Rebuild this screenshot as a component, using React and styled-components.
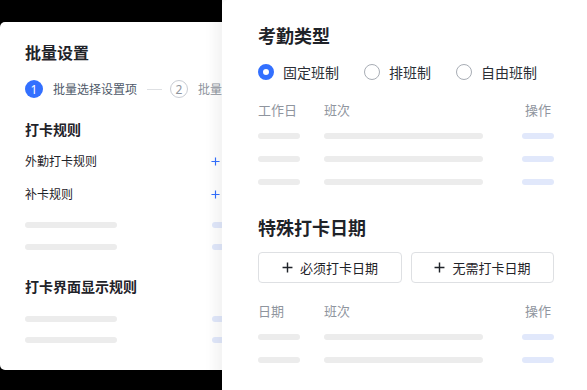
import React from "react";
import styled, { createGlobalStyle } from "styled-components";

const GlobalStyle = createGlobalStyle`
  html, body {
    margin: 0;
    padding: 0;
    background: #ffffff;
  }
  body {
    font-family: "Noto Sans CJK SC", "Noto Sans", sans-serif;
    color: #1f2329;
  }
`;

const BLUE = "#3370ff";

function Plus({ color = BLUE, size = 9 }) {
  return (
    <svg width={size} height={size} viewBox="0 0 10 10">
      <path d="M5 0.5v9M0.5 5h9" stroke={color} strokeWidth="1.3" fill="none" />
    </svg>
  );
}

export default function App() {
  return (
    <>
      <GlobalStyle />
      <Page>
        <LeftFrame>
          <Card>
            <CardTitle>批量设置</CardTitle>
            <Steps>
              <StepDot active>1</StepDot>
              <StepText>批量选择设置项</StepText>
              <StepLine />
              <StepDot>2</StepDot>
              <StepText muted>批量修改</StepText>
            </Steps>

            <GroupTitle mt={21}>打卡规则</GroupTitle>
            <RuleRow mt={13}>
              <span>外勤打卡规则</span>
              <Plus />
            </RuleRow>
            <RuleRow mt={15}>
              <span>补卡规则</span>
              <Plus />
            </RuleRow>
            <SkelRow mt={19}>
              <Bar w={92} />
              <Bar w={20} blue />
            </SkelRow>
            <SkelRow mt={16}>
              <Bar w={92} />
              <Bar w={20} blue />
            </SkelRow>

            <GroupTitle mt={26}>打卡界面显示规则</GroupTitle>
            <SkelRow mt={20}>
              <Bar w={92} />
              <Bar w={20} blue />
            </SkelRow>
            <SkelRow mt={15}>
              <Bar w={92} />
              <Bar w={20} blue />
            </SkelRow>
          </Card>
        </LeftFrame>

        <Panel>
          <Heading>考勤类型</Heading>
          <Radios>
            <RadioItem>
              <Radio checked />
              固定班制
            </RadioItem>
            <RadioItem>
              <Radio />
              排班制
            </RadioItem>
            <RadioItem>
              <Radio />
              自由班制
            </RadioItem>
          </Radios>

          <Table mt={19}>
            <HeadCell>工作日</HeadCell>
            <HeadCell>班次</HeadCell>
            <HeadCell center>操作</HeadCell>
            {[0, 1, 2].map((i) => (
              <React.Fragment key={i}>
                <Cell><Bar w={42} /></Cell>
                <Cell><Bar w={159} /></Cell>
                <Cell><Bar w={32} blue /></Cell>
              </React.Fragment>
            ))}
          </Table>

          <Heading mt={21}>特殊打卡日期</Heading>
          <Buttons>
            <AddButton>
              <Plus color="#1f2329" size={11} />
              必须打卡日期
            </AddButton>
            <AddButton>
              <Plus color="#1f2329" size={11} />
              无需打卡日期
            </AddButton>
          </Buttons>

          <Table mt={19}>
            <HeadCell>日期</HeadCell>
            <HeadCell>班次</HeadCell>
            <HeadCell center>操作</HeadCell>
            {[0, 1].map((i) => (
              <React.Fragment key={i}>
                <Cell><Bar w={42} /></Cell>
                <Cell><Bar w={159} /></Cell>
                <Cell><Bar w={32} blue /></Cell>
              </React.Fragment>
            ))}
          </Table>
        </Panel>
      </Page>
    </>
  );
}

const Page = styled.div`
  display: flex;
  width: 587px;
  height: 390px;
  overflow: hidden;
`;

const LeftFrame = styled.div`
  width: 222px;
  flex: none;
  background: #000;
  padding: 22px 0 20px;
  box-sizing: border-box;
  display: flex;
`;

const Card = styled.div`
  flex: 1;
  background: #fff;
  border-radius: 5px 0 0 5px;
  padding: 19px 2px 0 25px;
  overflow: hidden;
  display: flex;
  flex-direction: column;
`;

const CardTitle = styled.div`
  font-size: 16px;
  line-height: 22px;
  font-weight: 700;
  color: #1f2329;
`;

const Steps = styled.div`
  margin-top: 17px;
  display: flex;
  align-items: center;
  height: 18px;
  white-space: nowrap;
`;

const StepDot = styled.div`
  flex: none;
  width: 18px;
  height: 18px;
  box-sizing: border-box;
  border-radius: 50%;
  display: flex;
  align-items: center;
  justify-content: center;
  font-size: 12px;
  font-family: "Noto Sans", sans-serif;
  background: ${({ active }) => (active ? BLUE : "#fff")};
  color: ${({ active }) => (active ? "#fff" : "#8f959e")};
  border: ${({ active }) => (active ? "none" : "1px solid #c9cdd4")};
`;

const StepText = styled.span`
  margin-left: 10px;
  font-size: 12px;
  line-height: 18px;
  color: ${({ muted }) => (muted ? "#8f959e" : "#4e5969")};
`;

const StepLine = styled.div`
  flex: none;
  width: 15px;
  height: 1px;
  background: #dee0e3;
  margin: 0 8px 0 10px;
`;

const GroupTitle = styled.div`
  margin-top: ${({ mt }) => mt}px;
  font-size: 14px;
  line-height: 20px;
  font-weight: 700;
  color: #1f2329;
`;

const RuleRow = styled.div`
  margin-top: ${({ mt }) => mt}px;
  display: flex;
  align-items: center;
  justify-content: space-between;
  font-size: 12px;
  line-height: 18px;
  color: #1f2329;
`;

const SkelRow = styled.div`
  margin-top: ${({ mt }) => mt}px;
  display: flex;
  align-items: center;
  justify-content: space-between;
  margin-right: -12px;
`;

const Bar = styled.div`
  width: ${({ w }) => w}px;
  height: 6px;
  border-radius: 3px;
  background: ${({ blue }) => (blue ? "#e1e8fb" : "#ececec")};
`;

const Panel = styled.div`
  flex: 1;
  position: relative;
  z-index: 1;
  background: #fff;
  border-top-left-radius: 6px;
  box-shadow: -6px 0 14px rgba(0, 0, 0, 0.06);
  padding: 22px 33px 0 36px;
  display: flex;
  flex-direction: column;
`;

const Heading = styled.div`
  margin-top: ${({ mt }) => mt || 0}px;
  font-size: 18px;
  line-height: 26px;
  font-weight: 700;
  color: #1f2329;
`;

const Radios = styled.div`
  margin-top: 14px;
  display: flex;
  gap: 25px;
  height: 20px;
  align-items: center;
`;

const RadioItem = styled.label`
  display: flex;
  align-items: center;
  gap: 9px;
  font-size: 14px;
  color: #2b2f36;
`;

const Radio = styled.span`
  width: 16px;
  height: 16px;
  box-sizing: border-box;
  border-radius: 50%;
  border: ${({ checked }) => (checked ? `5px solid ${BLUE}` : "1px solid #a8adb5")};
  background: #fff;
`;

const Table = styled.div`
  margin-top: ${({ mt }) => mt}px;
  display: grid;
  grid-template-columns: 66px 1fr 32px;
  grid-auto-rows: 23px;
  grid-template-rows: 23px;
`;

const HeadCell = styled.div`
  font-size: 13px;
  line-height: 18px;
  color: #8f959e;
  text-align: ${({ center }) => (center ? "center" : "left")};
`;

const Cell = styled.div`
  display: flex;
  align-items: center;
`;

const Buttons = styled.div`
  margin-top: 12px;
  display: grid;
  grid-template-columns: 144px 143px;
  gap: 9px;
`;

const AddButton = styled.button`
  height: 31px;
  border: 1px solid #dee0e3;
  border-radius: 4px;
  background: #fff;
  display: flex;
  align-items: center;
  justify-content: center;
  gap: 7px;
  font-family: "Noto Sans CJK SC", sans-serif;
  font-size: 13px;
  color: #1f2329;
  padding: 0;
`;
